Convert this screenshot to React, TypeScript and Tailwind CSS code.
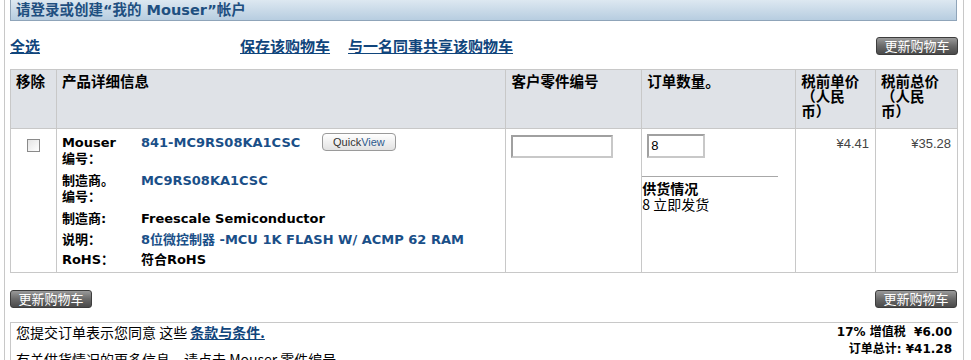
import React from "react";

const FONT = { fontFamily: '"DejaVu Sans", "Noto Sans CJK SC", sans-serif' };
const CJK = { fontFamily: '"Noto Sans CJK SC", sans-serif' };
const ARIAL = { fontFamily: '"Liberation Sans", Arial, sans-serif' };

function GrayButton() {
  return (
    <button
      className="block h-[18px] w-[82px] rounded-[3px] border border-[#3d3d3d] bg-gradient-to-b from-[#9a9a9a] via-[#6a6a6a] to-[#4a4a4a] text-[13px] leading-[16px] text-white"
      style={CJK}
    >
      更新购物车
    </button>
  );
}

export default function App() {
  return (
    <div className="h-[360px] w-[971px] overflow-hidden bg-white" style={FONT}>
      <div className="ml-[4px] min-h-[360px] w-[960px] border-x border-[#c8c8c8] pl-[5px] pr-[4px]">
        {/* Header bar */}
        <div className="flex h-[21px] w-[947px] items-center border-b border-l border-r border-[#8fa4b9] bg-gradient-to-b from-[#dde8f1] to-[#b7cde0] pl-[5px]">
          <span className="text-[14.5px] font-bold leading-[16px] text-[#1e4f80]">
            请登录或创建“我的 Mouser”帐户
          </span>
        </div>

        {/* Links row */}
        <div className="mt-[16px] flex h-[18px] items-center">
          <a className="w-[230px] text-[15px] font-bold leading-[18px] text-[#10457c] underline" style={CJK}>全选</a>
          <a className="text-[15px] font-bold leading-[18px] text-[#10457c] underline" style={CJK}>保存该购物车</a>
          <a className="ml-[18px] text-[15px] font-bold leading-[18px] text-[#10457c] underline" style={CJK}>与一名同事共享该购物车</a>
          <div className="ml-auto mr-[1px] flex">
            <GrayButton />
          </div>
        </div>

        {/* Table */}
        <table className="mt-[14px] w-[948px] border-collapse border border-[#c8c8c8]">
          <thead>
            <tr className="h-[59px] bg-[#dfe2e7] align-top text-[14.5px] font-bold leading-[15px] text-black">
              <th className="w-[46px] border border-[#c8c8c8] px-[5px] pt-[5px] text-left font-bold">移除</th>
              <th className="w-[450px] border border-[#c8c8c8] px-[5px] pt-[5px] text-left font-bold">产品详细信息</th>
              <th className="w-[136px] border border-[#c8c8c8] px-[5px] pt-[5px] text-left font-bold">客户零件编号</th>
              <th className="w-[154px] border border-[#c8c8c8] px-[5px] pt-[5px] text-left font-bold">订单数量。</th>
              <th className="w-[80px] border border-[#c8c8c8] px-[5px] pt-[5px] text-left font-bold">
                税前单价<br />（人民<br />币）
              </th>
              <th className="w-[82px] border border-[#c8c8c8] px-[5px] pt-[5px] text-left font-bold">
                税前总价<br />（人民<br />币）
              </th>
            </tr>
          </thead>
          <tbody>
            <tr className="h-[144px] align-top">
              <td className="border border-[#c8c8c8] pt-[6px] text-center">
                <span className="inline-block h-[13px] w-[13px] border border-[#8a8a8a] bg-gradient-to-br from-[#e4e4e4] to-white" />
              </td>
              <td className="border border-[#c8c8c8] px-[5px] pt-[3px]">
                <table className="border-collapse text-[13px] leading-[16px]">
                  <tbody>
                    <tr className="align-top">
                      <td className="w-[79px] py-[3px] font-bold text-black">Mouser<br />编号：</td>
                      <td className="py-[3px]">
                        <div className="flex items-start">
                          <a className="w-[181px] font-bold text-[#1a4f88]">841-MC9RS08KA1CSC</a>
                          <span
                            className="flex h-[18px] w-[74px] -translate-y-[2px] items-center justify-center rounded-[4px] border border-[#9a9a9a] bg-gradient-to-b from-white to-[#e2e2e2] text-[11px] leading-none"
                            style={ARIAL}
                          >
                            <span className="text-[#333]">Quick</span>
                            <span className="text-[#2d5a8e]">View</span>
                          </span>
                        </div>
                      </td>
                    </tr>
                    <tr className="align-top">
                      <td className="py-[3px] font-bold text-black">制造商。<br />编号：</td>
                      <td className="py-[3px]">
                        <a className="font-bold text-[#1a4f88]">MC9RS08KA1CSC</a>
                      </td>
                    </tr>
                    <tr className="align-top">
                      <td className="py-[3px] font-bold text-black">制造商:</td>
                      <td className="py-[3px] font-bold text-black">Freescale Semiconductor</td>
                    </tr>
                    <tr className="align-top">
                      <td className="py-[2px] font-bold text-black">说明：</td>
                      <td className="py-[2px]">
                        <a className="font-bold text-[#1a4f88]">8位微控制器 -MCU 1K FLASH W/ ACMP 62 RAM</a>
                      </td>
                    </tr>
                    <tr className="align-top">
                      <td className="py-[2px] font-bold text-black">RoHS：</td>
                      <td className="py-[2px] font-bold text-black">符合RoHS</td>
                    </tr>
                  </tbody>
                </table>
              </td>
              <td className="border border-[#c8c8c8] px-[5px] pt-[6px]">
                <div className="h-[23px] w-[102px] border-2 border-[#a0a0a0] border-b-[#c8c8c8] border-r-[#c8c8c8] bg-white" />
              </td>
              <td className="border border-[#c8c8c8] p-0 pt-[5px]">
                <div className="ml-[5px] flex h-[24px] w-[58px] items-center border-2 border-[#a0a0a0] border-b-[#c8c8c8] border-r-[#c8c8c8] bg-white pl-[2px] text-[13px]" style={ARIAL}>
                  8
                </div>
                <div className="mt-[18px] w-[136px] border-t border-[#a8a8a8]" />
                <div className="mt-[3px] text-[14px] font-bold leading-[16px] text-black" style={CJK}>供货情况</div>
                <div className="text-[14px] leading-[16px] text-black" style={CJK}>8 立即发货</div>
              </td>
              <td className="border border-[#c8c8c8] pr-[6px] pt-[5px] text-right text-[13px] text-[#444]" style={ARIAL}>
                ¥4.41
              </td>
              <td className="border border-[#c8c8c8] pr-[6px] pt-[5px] text-right text-[13px] text-[#444]" style={ARIAL}>
                ¥35.28
              </td>
            </tr>
          </tbody>
        </table>

        {/* Buttons row */}
        <div className="mt-[17px] flex h-[18px] w-[948px] items-start justify-between">
          <GrayButton />
          <div className="mr-[1px] flex">
            <GrayButton />
          </div>
        </div>

        {/* Bottom box */}
        <div className="mt-[14px] flex w-[948px] border-l border-t border-[#c8c8c8] pl-[5px] pr-[6px] pt-[1px]">
          <div className="flex-1 text-[14px] leading-[17px] text-black" style={CJK}>
            <div>
              您提交订单表示您同意 这些{" "}
              <a className="font-bold text-[#10457c] underline">条款与条件.</a>
            </div>
            <div className="mt-[10px]">有关供货情况的更多信息，请点击 Mouser 零件编号。</div>
          </div>
          <div className="text-right text-[12px] font-bold leading-[17px] text-black">
            <div>17% 增值税&nbsp;&nbsp;¥6.00</div>
            <div>订单总计: ¥41.28</div>
          </div>
        </div>
      </div>
    </div>
  );
}
